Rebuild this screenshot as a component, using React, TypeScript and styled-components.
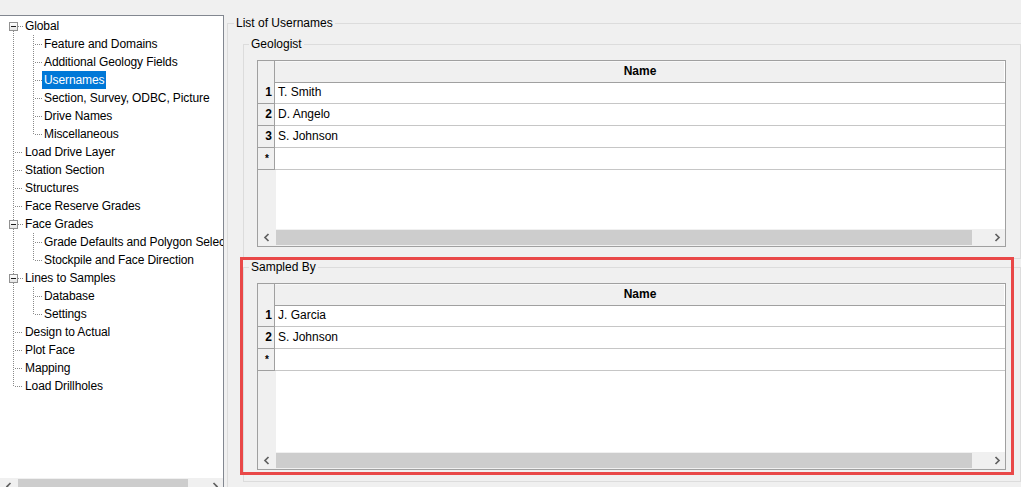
import React from 'react';
import styled, { createGlobalStyle } from 'styled-components';

const GlobalStyle = createGlobalStyle`
  html, body { margin: 0; padding: 0; background: #f0f0f0; }
  body {
    font-family: "Liberation Sans", Arial, sans-serif;
    font-size: 12px;
    color: #000;
  }
  #root { width: 1021px; height: 487px; overflow: hidden; }
`;

const Window = styled.div`
  display: flex;
  align-items: flex-start;
  width: 1021px;
  height: 487px;
  padding-top: 15px;
  box-sizing: border-box;
  overflow: hidden;
  background: #f0f0f0;
`;

/* ---------- Tree ---------- */

const TreePanel = styled.div`
  flex: none;
  width: 223px;
  height: 479px;
  margin-left: -1px;
  border: 1px solid #828790;
  background: #fff;
  display: flex;
  flex-direction: column;
`;

const TreeBody = styled.div`
  flex: 1;
  overflow: hidden;
  padding-top: 1px;
`;

const TreeRow = styled.div`
  display: flex;
  align-items: center;
  height: 18px;
  white-space: nowrap;
`;

const Gutter = styled.svg`
  flex: none;
  display: block;
`;

const TreeLabel = styled.span<{ $selected?: boolean }>`
  display: inline-block;
  height: 18px;
  line-height: 18px;
  padding: 0 2px;
  letter-spacing: -0.1px;
  background: ${(p) => (p.$selected ? '#0078d7' : 'transparent')};
  color: ${(p) => (p.$selected ? '#fff' : '#000')};
`;

type TreeNode = {
  label: string;
  level: 0 | 1;
  expander?: boolean;
  first?: boolean;
  last?: boolean;
  lastChild?: boolean;
  selected?: boolean;
};

const nodes: TreeNode[] = [
  { label: 'Global', level: 0, expander: true, first: true },
  { label: 'Feature and Domains', level: 1 },
  { label: 'Additional Geology Fields', level: 1 },
  { label: 'Usernames', level: 1, selected: true },
  { label: 'Section, Survey, ODBC, Picture', level: 1 },
  { label: 'Drive Names', level: 1 },
  { label: 'Miscellaneous', level: 1, lastChild: true },
  { label: 'Load Drive Layer', level: 0 },
  { label: 'Station Section', level: 0 },
  { label: 'Structures', level: 0 },
  { label: 'Face Reserve Grades', level: 0 },
  { label: 'Face Grades', level: 0, expander: true },
  { label: 'Grade Defaults and Polygon Selection', level: 1 },
  { label: 'Stockpile and Face Direction', level: 1, lastChild: true },
  { label: 'Lines to Samples', level: 0, expander: true },
  { label: 'Database', level: 1 },
  { label: 'Settings', level: 1, lastChild: true },
  { label: 'Design to Actual', level: 0 },
  { label: 'Plot Face', level: 0 },
  { label: 'Mapping', level: 0 },
  { label: 'Load Drillholes', level: 0, last: true },
];

const DOT = '#8a8a8a';

const TreeGuides: React.FC<{ node: TreeNode }> = ({ node }) => {
  const w = node.level === 0 ? 23 : 42;
  const dash = { stroke: DOT, strokeWidth: 1, strokeDasharray: '1 1', shapeRendering: 'crispEdges' as const };
  const parts: React.ReactNode[] = [];
  if (node.level === 0) {
    if (node.expander) {
      if (!node.first) parts.push(<line key="vt" x1={13.5} y1={0} x2={13.5} y2={5} {...dash} />);
      parts.push(<line key="vb" x1={13.5} y1={14} x2={13.5} y2={18} {...dash} />);
      parts.push(<line key="h" x1={18} y1={9.5} x2={23} y2={9.5} {...dash} />);
      parts.push(
        <rect key="box" x={9.5} y={5.5} width={8} height={8} fill="url(#boxfill)" stroke="#919191" strokeWidth={1} shapeRendering="crispEdges" />
      );
      parts.push(<line key="minus" x1={11} y1={9.5} x2={16} y2={9.5} stroke="#1c1c1c" strokeWidth={1} shapeRendering="crispEdges" />);
    } else {
      parts.push(<line key="v" x1={13.5} y1={0} x2={13.5} y2={node.last ? 10 : 18} {...dash} />);
      parts.push(<line key="h" x1={15} y1={9.5} x2={23} y2={9.5} {...dash} />);
    }
  } else {
    parts.push(<line key="root" x1={13.5} y1={0} x2={13.5} y2={18} {...dash} />);
    parts.push(<line key="v" x1={33.5} y1={0} x2={33.5} y2={node.lastChild ? 10 : 18} {...dash} />);
    parts.push(<line key="h" x1={35} y1={9.5} x2={42} y2={9.5} {...dash} />);
  }
  return (
    <Gutter width={w} height={18} viewBox={`0 0 ${w} 18`}>
      <defs>
        <linearGradient id="boxfill" x1="0" y1="0" x2="0" y2="1">
          <stop offset="0" stopColor="#ffffff" />
          <stop offset="1" stopColor="#e4e4e4" />
        </linearGradient>
      </defs>
      {parts}
    </Gutter>
  );
};

/* ---------- Scroll bars ---------- */

const HScroll = styled.div<{ $lead: number }>`
  flex: none;
  height: 17px;
  display: grid;
  grid-template-columns: ${(p) => p.$lead}px 1fr 17px;
  background: #f0f0f0;
`;

const ScrollButton = styled.div`
  display: flex;
  align-items: center;
  justify-content: center;
`;

const ScrollTrack = styled.div<{ $offset: number; $thumb: number }>`
  display: flex;
  align-items: center;
  padding-left: ${(p) => p.$offset}px;
  &::before {
    content: '';
    display: block;
    width: ${(p) => p.$thumb}px;
    height: 15px;
    background: #cdcdcd;
  }
`;

const Chevron: React.FC<{ dir: 'left' | 'right' }> = ({ dir }) => (
  <svg width="8" height="9" viewBox="0 0 8 9">
    <path
      d={dir === 'left' ? 'M5.5 1 L2 4.5 L5.5 8' : 'M2.5 1 L6 4.5 L2.5 8'}
      fill="none"
      stroke="#606060"
      strokeWidth={1.7}
    />
  </svg>
);

const ScrollBar: React.FC<{ lead: number; offset: number; thumb: number }> = ({ lead, offset, thumb }) => (
  <HScroll $lead={lead}>
    <ScrollButton>
      <Chevron dir="left" />
    </ScrollButton>
    <ScrollTrack $offset={offset} $thumb={thumb} />
    <ScrollButton>
      <Chevron dir="right" />
    </ScrollButton>
  </HScroll>
);

/* ---------- Right side ---------- */

const RightPane = styled.div`
  flex: 1;
  min-width: 0;
`;

const OuterGroup = styled.fieldset`
  margin: 0 -16px 0 3px;
  padding: 5px 15px 20px 15px;
  border: 1px solid #dcdcdc;
  min-width: 0;
`;

const Caption = styled.legend<{ $shift: number }>`
  margin-left: ${(p) => p.$shift}px;
  padding: 0 2px;
  height: 16px;
  line-height: 16px;
  font-size: 12px;
  color: #000;
`;

const Group = styled.fieldset`
  margin: 0;
  padding: 8px 14px 11px 13px;
  border: 1px solid #dcdcdc;
  min-width: 0;
`;

const Highlighted = styled.div`
  position: relative;
`;

const HighlightFrame = styled.div`
  position: absolute;
  top: -2px;
  left: -3px;
  right: 7px;
  bottom: 7px;
  border: 3px solid #e94848;
  pointer-events: none;
`;

/* ---------- Grid ---------- */

const Grid = styled.div`
  height: 185px;
  border: 1px solid #a0a0a0;
  background: #fff;
  display: flex;
  flex-direction: column;
`;

const GridRow = styled.div<{ $header?: boolean }>`
  flex: none;
  display: grid;
  grid-template-columns: 17px 1fr;
  height: ${(p) => (p.$header ? 21 : 22)}px;
`;

const RowHead = styled.div<{ $star?: boolean }>`
  background: #f0f0f0;
  border-right: 1px solid #a0a0a0;
  border-bottom: 1px solid #a0a0a0;
  font-weight: bold;
  font-size: ${(p) => (p.$star ? 10 : 12)}px;
  text-align: right;
  padding-right: ${(p) => (p.$star ? 5 : 2)}px;
  line-height: 21px;
`;

const HeadCell = styled.div`
  background: #f0f0f0;
  border-bottom: 1px solid #a0a0a0;
  box-shadow: inset -1px 0 #ffffff, inset 0 1px #f8f8f8;
  text-align: center;
  font-weight: bold;
  line-height: 21px;
`;

const Cell = styled.div`
  border-bottom: 1px solid #c6c6c6;
  padding-left: 3px;
  line-height: 21px;
  white-space: nowrap;
`;

const Filler = styled.div`
  flex: 1;
  display: grid;
  grid-template-columns: 18px 1fr;
  &::before {
    content: '';
    background: #f0f0f0;
  }
`;

const NameGrid: React.FC<{ names: string[] }> = ({ names }) => (
  <Grid>
    <GridRow $header>
      <RowHead />
      <HeadCell>Name</HeadCell>
    </GridRow>
    {names.map((n, i) => (
      <GridRow key={n}>
        <RowHead>{i + 1}</RowHead>
        <Cell>{n}</Cell>
      </GridRow>
    ))}
    <GridRow>
      <RowHead $star>*</RowHead>
      <Cell />
    </GridRow>
    <Filler />
    <ScrollBar lead={18} offset={0} thumb={696} />
  </Grid>
);

export default function App() {
  return (
    <>
      <GlobalStyle />
      <Window>
        <TreePanel>
          <TreeBody>
            {nodes.map((n) => (
              <TreeRow key={n.label}>
                <TreeGuides node={n} />
                <TreeLabel $selected={n.selected}>{n.label}</TreeLabel>
              </TreeRow>
            ))}
          </TreeBody>
          <ScrollBar lead={17} offset={1} thumb={170} />
        </TreePanel>
        <RightPane>
          <OuterGroup>
            <Caption $shift={-9}>List of Usernames</Caption>
            <Group>
              <Caption $shift={-8}>Geologist</Caption>
              <NameGrid names={['T. Smith', 'D. Angelo', 'S. Johnson']} />
            </Group>
            <Highlighted>
              <Group>
                <Caption $shift={-8}>Sampled By</Caption>
                <NameGrid names={['J. Garcia', 'S. Johnson']} />
              </Group>
              <HighlightFrame />
            </Highlighted>
          </OuterGroup>
        </RightPane>
      </Window>
    </>
  );
}
